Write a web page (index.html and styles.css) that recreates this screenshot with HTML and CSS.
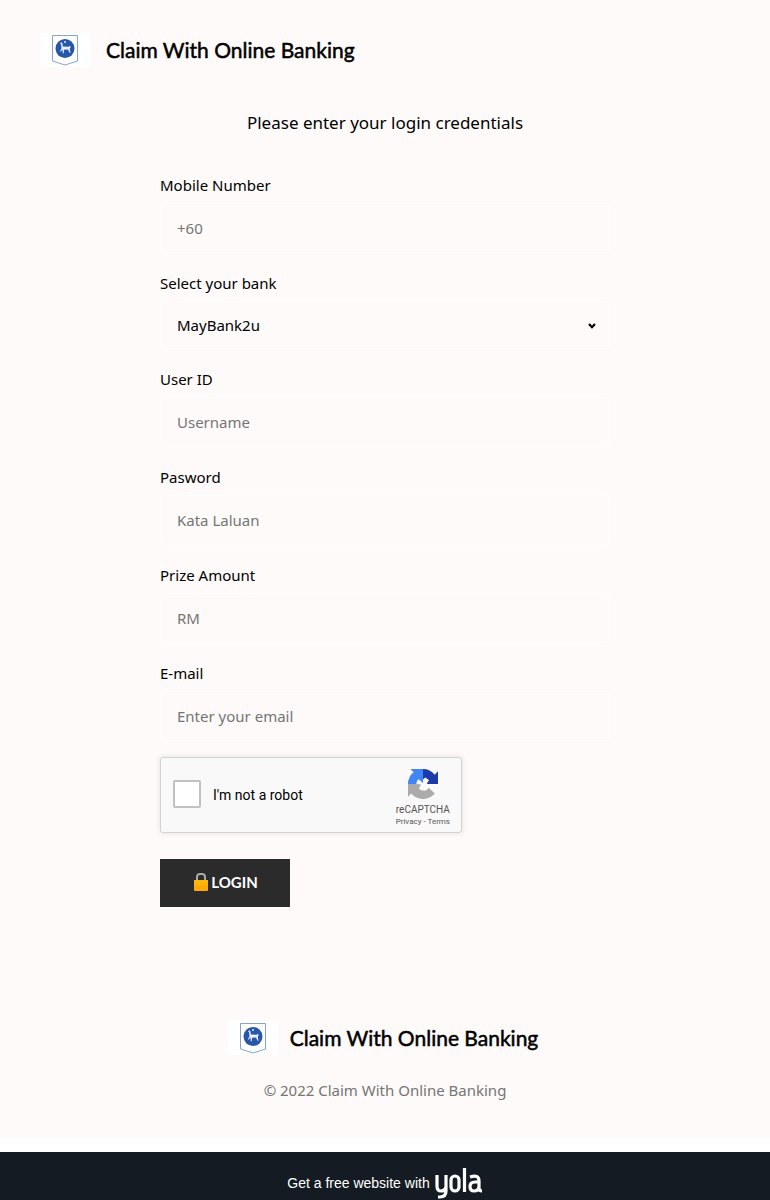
FILE: index.html
```html
<!DOCTYPE html>
<html lang="en">
<head>
<meta charset="utf-8">
<meta name="viewport" content="width=device-width, initial-scale=1">
<title>Claim With Online Banking</title>
<link rel="stylesheet" href="styles.css">
</head>
<body>
<svg class="defs" aria-hidden="true">
  <symbol id="crest" viewBox="0 0 50 34">
    <rect width="50" height="34" fill="#fff"/>
    <path d="M12.500 2.500H37.500V28L25 32L12.500 28Z" fill="#fff" stroke="#86a3d0" stroke-width="1"/>
    <circle cx="25" cy="15.500" r="9.500" fill="#2857a8"/>
    <path d="M20 10l1.500-.8 1 1.300.3 3 5.700.3 1.700-1 .3 2-.8 1 .8 4h-1l-1.500-3.200-4 .2-.2 3.500h-1l-.3-3.700-2 2.200-.5-.5 1.500-3-.5-4z" fill="#e8f0fc"/>
    <circle cx="25" cy="9" r="1" fill="#dce8fa"/>
  </symbol>
</svg>
<div class="page">
  <header class="header">
    <svg class="crest" role="img" aria-label="Crest"><use href="#crest"/></svg>
    <span class="brand">Claim With Online Banking</span>
  </header>
  <main class="main">
    <h1 class="title">Please enter your login credentials</h1>
    <div class="form">
      <div class="field"><label for="mobile">Mobile Number</label><input class="control" id="mobile" type="text" placeholder="+60"></div>
      <div class="field"><label for="bank">Select your bank</label>
        <div class="select-wrap">
          <select class="control select" id="bank"><option>MayBank2u</option></select>
          <svg class="chevron" viewBox="0 0 8 6" aria-hidden="true"><path d="M1 1l3 3.200L7 1" fill="none" stroke="#000" stroke-width="2.200"/></svg>
        </div>
      </div>
      <div class="field"><label for="user">User ID</label><input class="control" id="user" type="text" placeholder="Username"></div>
      <div class="field"><label for="pass">Pasword</label><input class="control" id="pass" type="text" placeholder="Kata Laluan"></div>
      <div class="field"><label for="prize">Prize Amount</label><input class="control" id="prize" type="text" placeholder="RM"></div>
      <div class="field"><label for="email">E-mail</label><input class="control" id="email" type="text" placeholder="Enter your email"></div>
      <div class="captcha">
        <input class="captcha-box" id="robot" type="checkbox">
        <label class="captcha-label" for="robot">I'm not a robot</label>
        <div class="captcha-brand">
          <svg class="captcha-logo" viewBox="0 0 64 64" aria-hidden="true">
            <path d="M0 32v27l7-7a32 32 0 0 0 50 0L44 40c-3 5-7 7-11 6-4 0-8-2-10-5l9-9z" fill="#ababab"/>
            <path d="M32 0H5l7 7A32 32 0 0 0 0 32h18c0-5 2-8 5-10l9 8z" fill="#4285f4"/>
            <path d="M32 0v22l5-4 8 6-6 8h25V5l-7 7A32 32 0 0 0 32 0z" fill="#1c3aa9"/>
            <path d="M18 32l6-7 8 7 4-11 7 2-4 7 6 4-4 8-9 3-8-5 4-7z" fill="#f9f9f9"/>
          </svg>
          <span class="captcha-name">reCAPTCHA</span>
          <span class="captcha-links"><a href="#">Privacy</a> - <a href="#">Terms</a></span>
        </div>
      </div>
      <button class="login" type="button"><svg class="lock" viewBox="0 0 14 18" aria-hidden="true"><path d="M3 9V4q0-3 3-3h2q3 0 3 3v5" fill="none" stroke="#a9a9a9" stroke-width="2"/><rect y="7" width="14" height="11" rx="1" fill="#ffa90a"/><rect y="7" width="14" height="5" rx="1" fill="#ffb80a"/></svg>LOGIN</button>
    </div>
  </main>
  <footer class="footer">
    <div class="footer-brand">
      <svg class="crest" role="img" aria-label="Crest"><use href="#crest"/></svg>
      <span class="brand">Claim With Online Banking</span>
    </div>
    <p class="copyright">© 2022 Claim With Online Banking</p>
  </footer>
</div>
<a class="promo" href="#">
  <span>Get a free website with</span>
  <svg class="yola" viewBox="0 0 48 32" role="img" aria-label="yola"><g fill="none" stroke="#fff" stroke-width="3.200"><path d="M2 8v11q0 5 4 5t5-4M11 8v16q0 6-6 6H3"/><rect x="16" y="9" width="8" height="15" rx="4"/><path d="M29.500 1v24M35 10q9-3 9 4v7q0 3 3 3M44 15h-4q-5 0-5 4.500t4 4.500q5 0 5-5"/></g></svg>
</a>
</body>
</html>
```

FILE: styles.css
```css
* { box-sizing: border-box; }
body { margin: 0; background: #fff; color: #000; font: 16px/24px "Noto Sans", sans-serif; }
.defs { position: absolute; width: 0; height: 0; }
.page { background: #fefaf9; }
.header { display: flex; align-items: center; gap: 16px; padding: 33px 40px 0; }
.crest { width: 50px; height: 34px; flex: none; }
.brand { font: 400 21px/32px Lato, sans-serif; -webkit-text-stroke: 0.5px #000; }
.main { padding: 42px 40px 0; }
.title { margin: 0; font-size: 17px; font-weight: 400; line-height: 28px; text-align: center; }
.form { width: 100%; max-width: 450px; margin: 36px auto 0; }
.field { display: flex; flex-direction: column; gap: 6px; margin-bottom: 18px; font-size: 15px; }
.control { width: 100%; height: 50px; padding: 0 16px; border: 1px solid #fff; border-radius: 4px; background: #fefaf9; color: #000; font: inherit; outline: 0; }
.control::placeholder { color: #757575; opacity: 1; }
.select-wrap { position: relative; }
.select { display: block; height: 48px; appearance: none; }
.chevron { position: absolute; right: 14px; top: 22px; width: 8px; height: 6px; pointer-events: none; }
.captcha { display: flex; align-items: center; width: 302px; max-width: 100%; height: 76px; margin-top: -2px; padding: 0 11px 0 12px; border: 1px solid #d3d3d3; border-radius: 3px; background: #f9f9f9; box-shadow: 0 0 4px 1px rgba(0, 0, 0, .08); font-family: Roboto, sans-serif; }
.captcha-box { appearance: none; flex: none; width: 28px; height: 28px; margin: 0 12px 2px 0; border: 2px solid #c1c1c1; border-radius: 2px; background: #fff; }
.captcha-label { flex: 1; font-size: 14px; }
.captcha-brand { display: flex; flex-direction: column; align-items: center; padding-top: 3px; color: #555; }
.captcha-logo { width: 30px; height: 30px; margin: 3px 0 5px; }
.captcha-name { font-size: 10px; line-height: 12px; }
.captcha-links { font-size: 8px; line-height: 12px; word-spacing: normal; }
.captcha-links a { color: inherit; text-decoration: none; }
.login { display: flex; align-items: center; justify-content: center; gap: 3px; width: 130px; height: 48px; margin-top: 26px; padding: 0 0 2px 2px; border: 0; background: #2b2b2b; color: #fff; font: 700 15px/24px Lato, sans-serif; }
.lock { width: 14px; height: 18px; }
.footer { display: flex; flex-direction: column; align-items: center; padding: 114px 40px 36px; }
.footer-brand { display: flex; align-items: center; gap: 12px; padding-right: 4px; }
.copyright { margin: 23px 0 0; color: #757575; font-size: 15px; }
.promo { display: flex; justify-content: center; align-items: center; gap: 5px; margin-top: 14px; padding: 14px 0 0; background: #141b22; color: #fff; font: 14px/34px "Liberation Sans", Arial, sans-serif; text-decoration: none; }
.yola { width: 48px; height: 32px; }
```
